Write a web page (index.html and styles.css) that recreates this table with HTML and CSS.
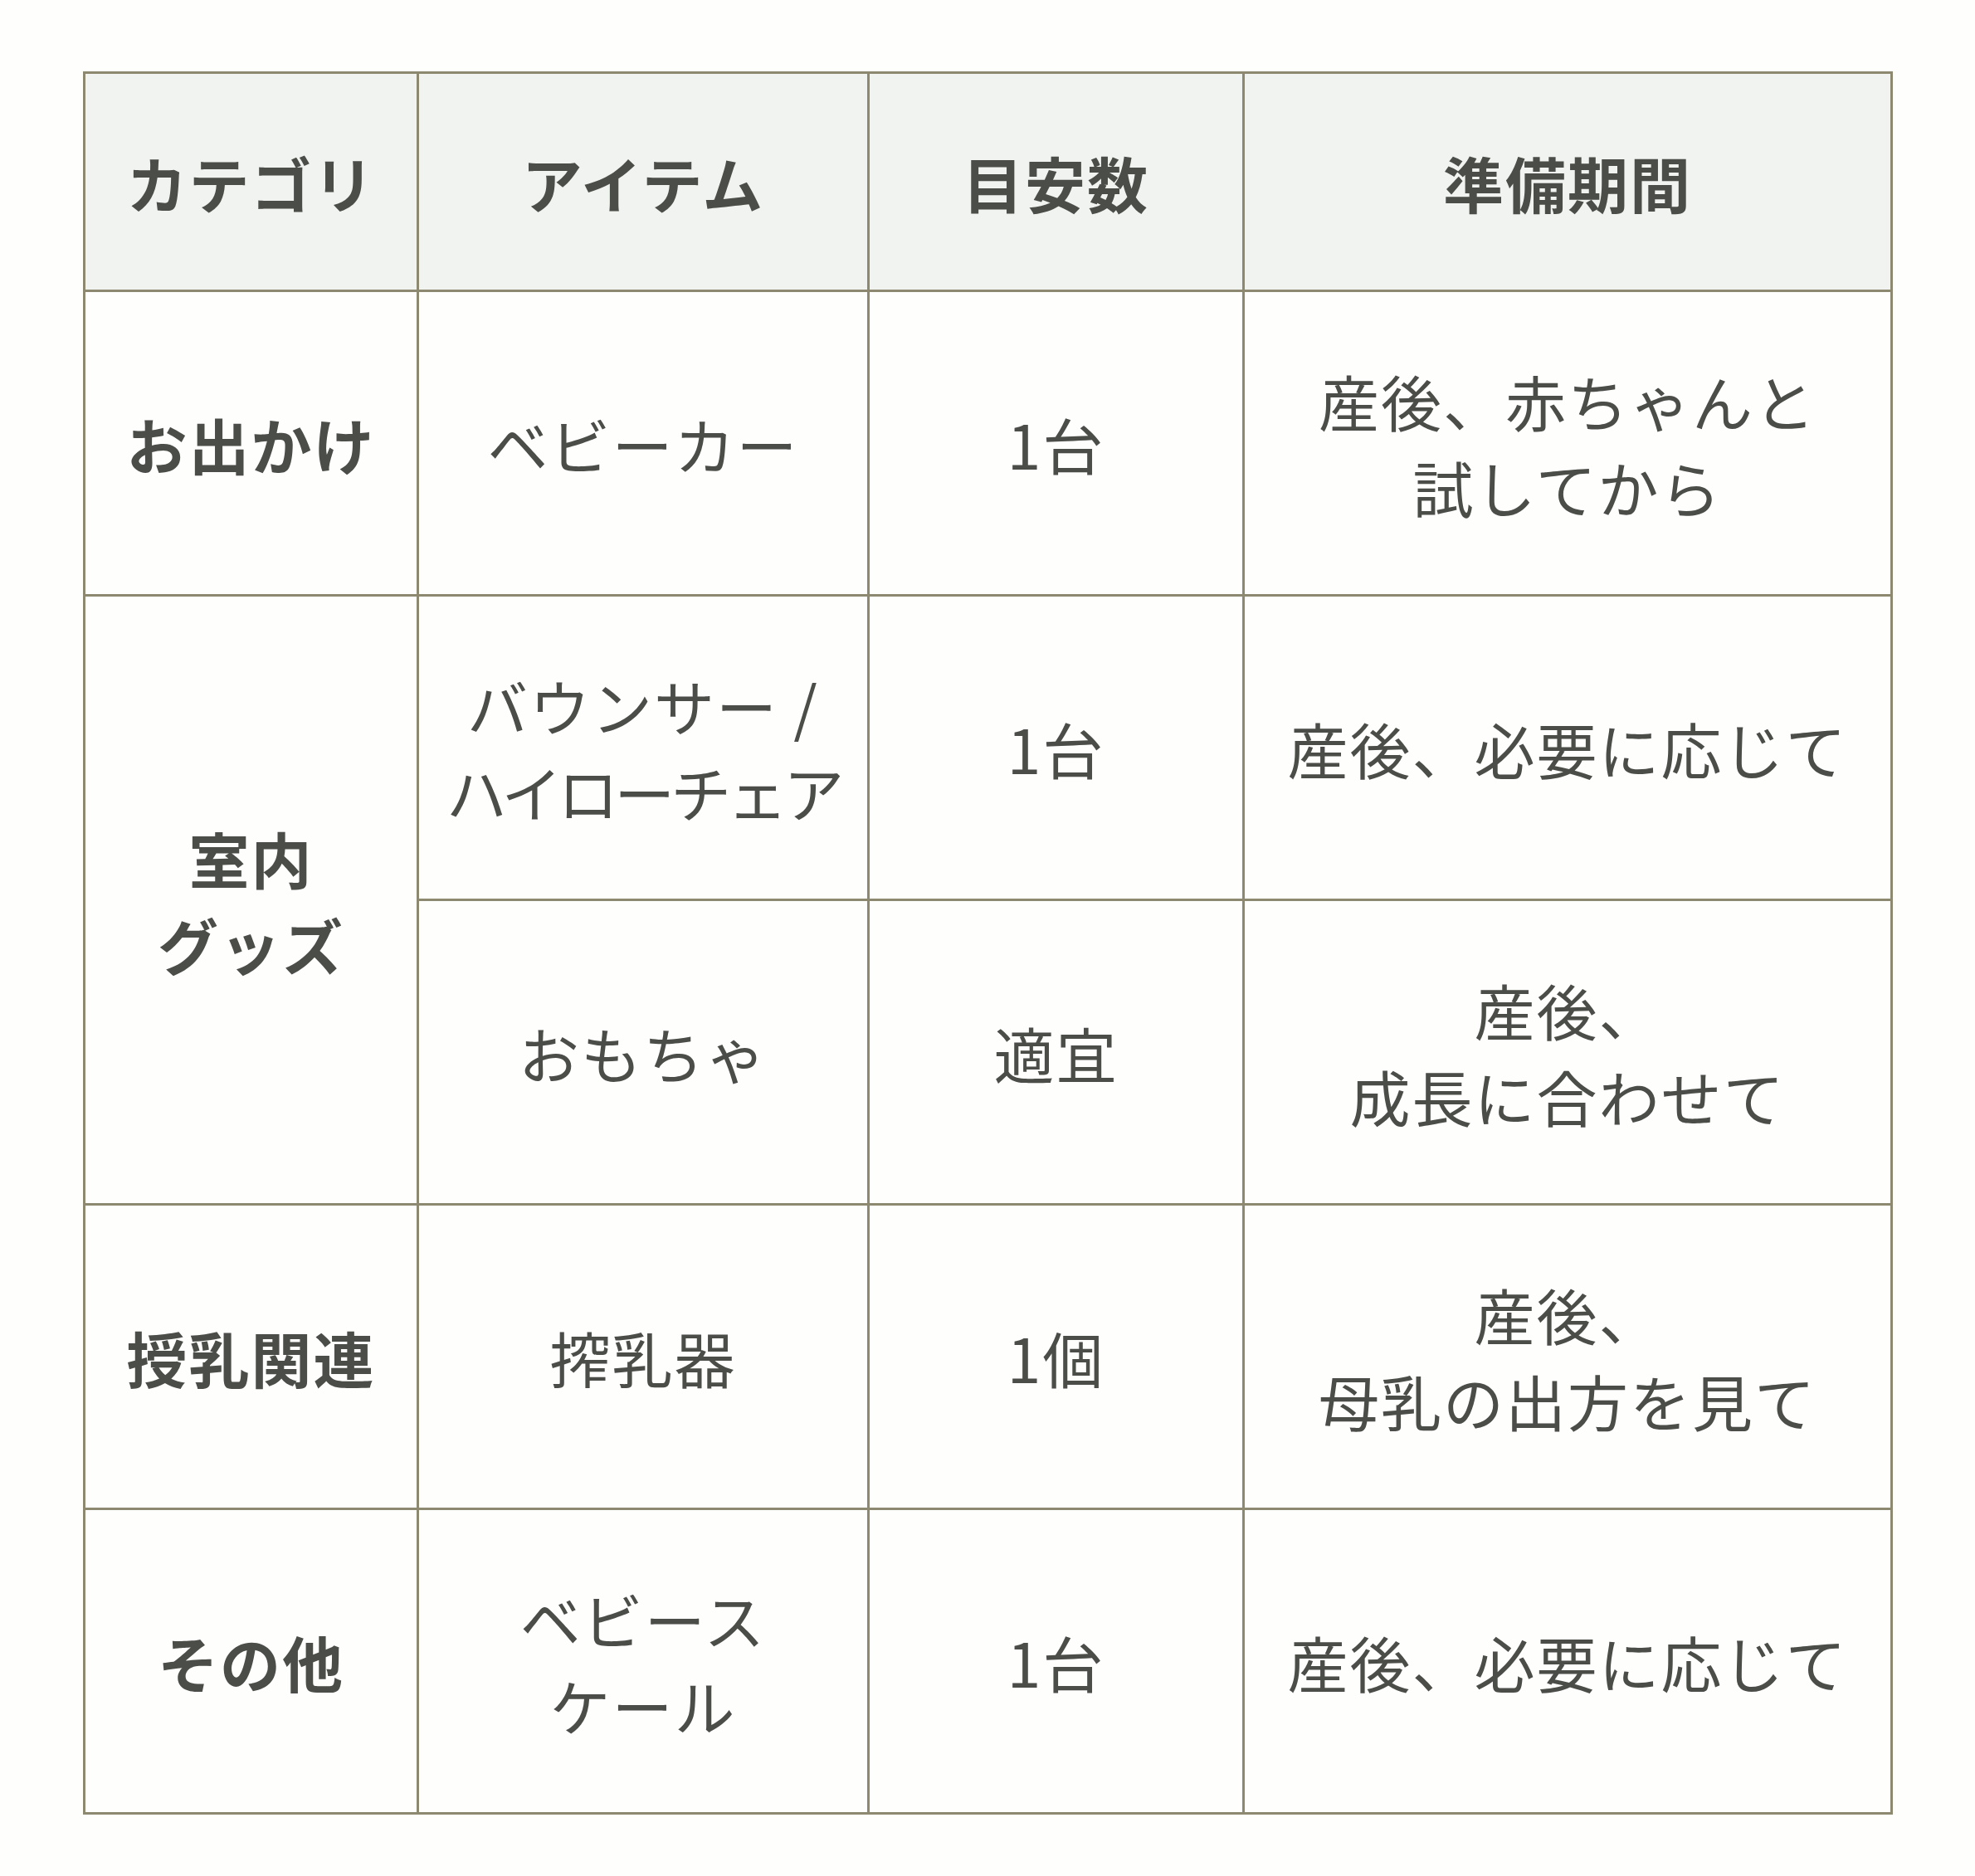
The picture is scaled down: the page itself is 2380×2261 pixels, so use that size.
FILE: index.html
```html
<!DOCTYPE html>
<html lang="ja">
<head>
<meta charset="utf-8">
<title>準備アイテム表</title>
<link rel="stylesheet" href="styles.css">
</head>
<body>
<table class="prep-table">
  <colgroup>
    <col class="col-cat">
    <col class="col-item">
    <col class="col-qty">
    <col class="col-period">
  </colgroup>
  <thead>
    <tr class="head-row">
      <th>カテゴリ</th>
      <th>アイテム</th>
      <th>目安数</th>
      <th>準備期間</th>
    </tr>
  </thead>
  <tbody>
    <tr class="body-row">
      <td class="cat">お出かけ</td>
      <td>ベビーカー</td>
      <td>1台</td>
      <td>産後、赤ちゃんと<br>試してから</td>
    </tr>
    <tr class="body-row">
      <td class="cat" rowspan="2">室内<br>グッズ</td>
      <td>バウンサー /<br><span class="tight">ハイローチェア</span></td>
      <td>1台</td>
      <td>産後、必要に応じて</td>
    </tr>
    <tr class="body-row">
      <td>おもちゃ</td>
      <td>適宜</td>
      <td>産後、<br>成長に合わせて</td>
    </tr>
    <tr class="body-row">
      <td class="cat">授乳関連</td>
      <td>搾乳器</td>
      <td>1個</td>
      <td>産後、<br>母乳の出方を見て</td>
    </tr>
    <tr class="body-row">
      <td class="cat">その他</td>
      <td>ベビース<br>ケール</td>
      <td>1台</td>
      <td>産後、必要に応じて</td>
    </tr>
  </tbody>
</table>
</body>
</html>
```

FILE: styles.css
```css
html, body {
  margin: 0;
  padding: 0;
  background: #fefefc;
}

body {
  padding: 86px 0 0 100px;
  font-family: "Noto Sans CJK JP", "Noto Sans", sans-serif;
  color: #4a4d48;
}

.prep-table {
  border-collapse: collapse;
  table-layout: fixed;
  width: 2181px;
}

.col-cat { width: 402px; }
.col-item { width: 543px; }
.col-qty { width: 452px; }
.col-period { width: 781px; }

.prep-table th,
.prep-table td {
  border: 3px solid #8c8970;
  text-align: center;
  vertical-align: middle;
  font-size: 73px;
  line-height: 104px;
  letter-spacing: 2px;
  padding: 0 6px;
  white-space: nowrap;
}

.head-row th {
  height: 260px;
  background: #f0f3ef;
  font-weight: 700;
}

.body-row td {
  height: 364px;
  font-weight: 400;
}

.prep-table td.cat {
  font-weight: 700;
}

.tight {
  letter-spacing: -5px;
}
```
